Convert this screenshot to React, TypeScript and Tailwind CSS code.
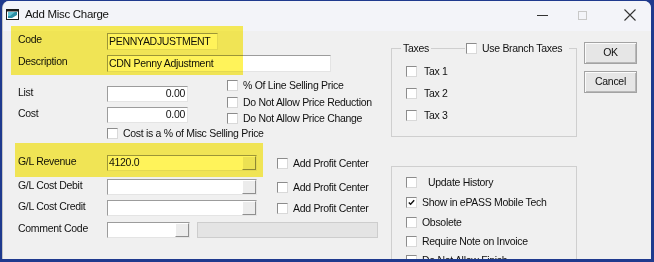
import type { ReactNode } from 'react';

function Check({ checked }: { checked?: boolean }) {
  return (
    <span className="flex h-[11px] w-[11px] shrink-0 items-center justify-center border border-t-[#8c8c8c] border-l-[#8c8c8c] border-b-[#d9d9d9] border-r-[#d9d9d9] bg-white">
      {checked && (
        <svg width="7" height="7" viewBox="0 0 7 7">
          <path d="M0.8 3.4 L2.6 5.3 L6.2 1.2" fill="none" stroke="#111" strokeWidth="1.4" />
        </svg>
      )}
    </span>
  );
}

function CheckRow({ label, checked, className = '' }: { label: string; checked?: boolean; className?: string }) {
  return (
    <div className={`flex h-[11px] items-center ${className}`}>
      <Check checked={checked} />
      <span className="ml-[5px] whitespace-nowrap leading-none">{label}</span>
    </div>
  );
}

// sunken edit box, optional combo button on the right
function Field({
  className,
  children,
  dropdown,
  right,
}: {
  className: string;
  children?: ReactNode;
  dropdown?: boolean;
  right?: boolean;
}) {
  return (
    <div
      className={`flex items-stretch border border-t-[#9c9c9c] border-l-[#9c9c9c] border-b-[#e4e4e4] border-r-[#e4e4e4] bg-white ${className}`}
    >
      <div className={`flex flex-1 items-center overflow-hidden whitespace-nowrap px-[1px] ${right ? 'justify-end pr-[2px]' : ''}`}>
        {children}
      </div>
      {dropdown && (
        <div className="w-[14px] border border-t-white border-l-white border-b-[#8f8f8f] border-r-[#8f8f8f] bg-[#ececec]" />
      )}
    </div>
  );
}

function Label({ children }: { children: ReactNode }) {
  return <span className="w-[89px] shrink-0 pb-[3px] whitespace-nowrap">{children}</span>;
}

function GlRow({ label, value, className = '' }: { label: string; value?: string; className?: string }) {
  return (
    <div className={`flex h-[16px] items-center ${className}`}>
      <Label>{label}</Label>
      <Field className="h-[16px] w-[150px]" dropdown>
        {value}
      </Field>
      <div className="ml-[20px]">
        <CheckRow label="Add Profit Center" />
      </div>
    </div>
  );
}

function Btn({ children, className = '' }: { children: ReactNode; className?: string }) {
  return (
    <div
      className={`flex h-[22px] w-[53px] items-center justify-center border border-[#a3a3a3] bg-[#e6e6e6] shadow-[inset_1px_1px_#fbfbfb,inset_-1px_-1px_#b8b8b8] ${className}`}
    >
      {children}
    </div>
  );
}

export default function App() {
  return (
    <div className="relative h-[262px] w-[654px] overflow-hidden bg-[#1f3a8e] pl-[2px] pr-[3px] pt-[1px] font-['Liberation_Sans',Arial,sans-serif] text-[10.5px] tracking-[-0.3px] text-[#111]">
      <div className="flex h-[258px] flex-col overflow-hidden rounded-t-[7px] border-l border-[#c4c4c4] bg-[#f0f0f0]">
        {/* title bar */}
        <div className="flex h-[30px] shrink-0 items-start bg-[#f3f4f9] pl-[3px] pt-[6px]">
          <svg width="13" height="13" viewBox="0 0 13 13" className="mt-[1px]">
            <rect x="0.5" y="1.5" width="12" height="10" fill="#fff" stroke="#1b1b1b" />
            <rect x="0.5" y="1.5" width="12" height="2" fill="#1b1b1b" />
            <path d="M2 4 L11 4 L11 7 L6 10 L2 10 Z" fill="#2e8fa3" />
            <path d="M2 4 L9 4 L4 8 L2 8 Z" fill="#5fc1d1" />
          </svg>
          <span className="ml-[6px] text-[11.5px] leading-[14px]">Add Misc Charge</span>
          <div className="ml-auto flex h-[16px] items-center">
            <div className="flex w-[40px] justify-center">
              <div className="h-px w-[11px] bg-[#333]" />
            </div>
            <div className="flex w-[40px] justify-center">
              <div className="h-[9px] w-[9px] border border-[#c8c8c8]" />
            </div>
            <div className="flex w-[49px] justify-center pl-[6px]">
              <svg width="12" height="12" viewBox="0 0 12 12">
                <path d="M0.5 0.5 L11.5 11.5 M11.5 0.5 L0.5 11.5" stroke="#333" strokeWidth="1.1" />
              </svg>
            </div>
          </div>
        </div>

        {/* body */}
        <div className="flex flex-1">
          {/* left form */}
          <div className="flex w-[388px] shrink-0 flex-col pl-[15px]">
            <div className="mt-[2px] flex h-[17px] items-center">
              <Label>Code</Label>
              <Field className="h-[17px] w-[111px]">PENNYADJUSTMENT</Field>
            </div>
            <div className="mt-[5px] flex h-[17px] items-center">
              <Label>Description</Label>
              <Field className="h-[17px] w-[224px]">CDN Penny Adjustment</Field>
            </div>

            <div className="mt-[8px] flex">
              <div className="flex w-[209px] flex-col pt-[6px]">
                <div className="flex h-[16px] items-center">
                  <Label>List</Label>
                  <Field className="h-[16px] w-[81px]" right>
                    0.00
                  </Field>
                </div>
                <div className="mt-[5px] flex h-[16px] items-center">
                  <Label>Cost</Label>
                  <Field className="h-[16px] w-[81px]" right>
                    0.00
                  </Field>
                </div>
                <CheckRow className="mt-[5px] pl-[89px]" label="Cost is a % of Misc Selling Price" />
              </div>
              <div className="flex flex-col">
                <CheckRow label="% Of Line Selling Price" />
                <CheckRow className="mt-[6px]" label="Do Not Allow Price Reduction" />
                <CheckRow className="mt-[5px]" label="Do Not Allow Price Change" />
              </div>
            </div>

            <GlRow className="mt-[16px]" label="G/L Revenue" value="4120.0" />
            <GlRow className="mt-[8px]" label="G/L Cost Debit" />
            <GlRow className="mt-[5px]" label="G/L Cost Credit" />
            <div className="mt-[6px] flex h-[16px] items-center">
              <Label>Comment Code</Label>
              <Field className="h-[16px] w-[83px]" dropdown />
              <div className="ml-[7px] h-[16px] w-[181px] border border-[#cdcdcd] bg-[#e4e4e4]" />
            </div>
          </div>

          {/* group boxes */}
          <div className="flex w-[186px] shrink-0 flex-col">
            <div className="relative mt-[17px] h-[89px] border border-[#cfcfcf] pl-[14px] pt-[17px]">
              <span className="absolute left-[9px] top-[-7px] bg-[#f0f0f0] px-[2px] leading-[12px]">Taxes</span>
              <div className="absolute left-[73px] top-[-6px] bg-[#f0f0f0] pl-[1px] pr-[7px]">
                <CheckRow label="Use Branch Taxes" />
              </div>
              <CheckRow label="Tax 1" className="[&>span:last-child]:ml-[7px]" />
              <CheckRow label="Tax 2" className="mt-[11px] [&>span:last-child]:ml-[7px]" />
              <CheckRow label="Tax 3" className="mt-[11px] [&>span:last-child]:ml-[7px]" />
            </div>
            <div className="mt-[29px] h-[110px] border border-[#cfcfcf] pl-[14px] pt-[10px]">
              <CheckRow label="Update History" className="[&>span:last-child]:ml-[11px]" />
              <CheckRow className="mt-[9px]" label="Show in ePASS Mobile Tech" checked />
              <CheckRow className="mt-[9px]" label="Obsolete" />
              <CheckRow className="mt-[8px]" label="Require Note on Invoice" />
              <CheckRow className="mt-[8px]" label="Do Not Allow Finish" />
            </div>
          </div>

          {/* buttons */}
          <div className="ml-[7px] flex flex-col pt-[11px]">
            <Btn>OK</Btn>
            <Btn className="mt-[7px]">Cancel</Btn>
          </div>
        </div>
      </div>

      {/* yellow marker highlights */}
      <div className="absolute left-[11px] top-[26px] h-[49px] w-[232px] bg-[#fff35a] mix-blend-multiply" />
      <div className="absolute left-[15px] top-[143px] h-[34px] w-[248px] bg-[#fff35a] mix-blend-multiply" />
    </div>
  );
}
